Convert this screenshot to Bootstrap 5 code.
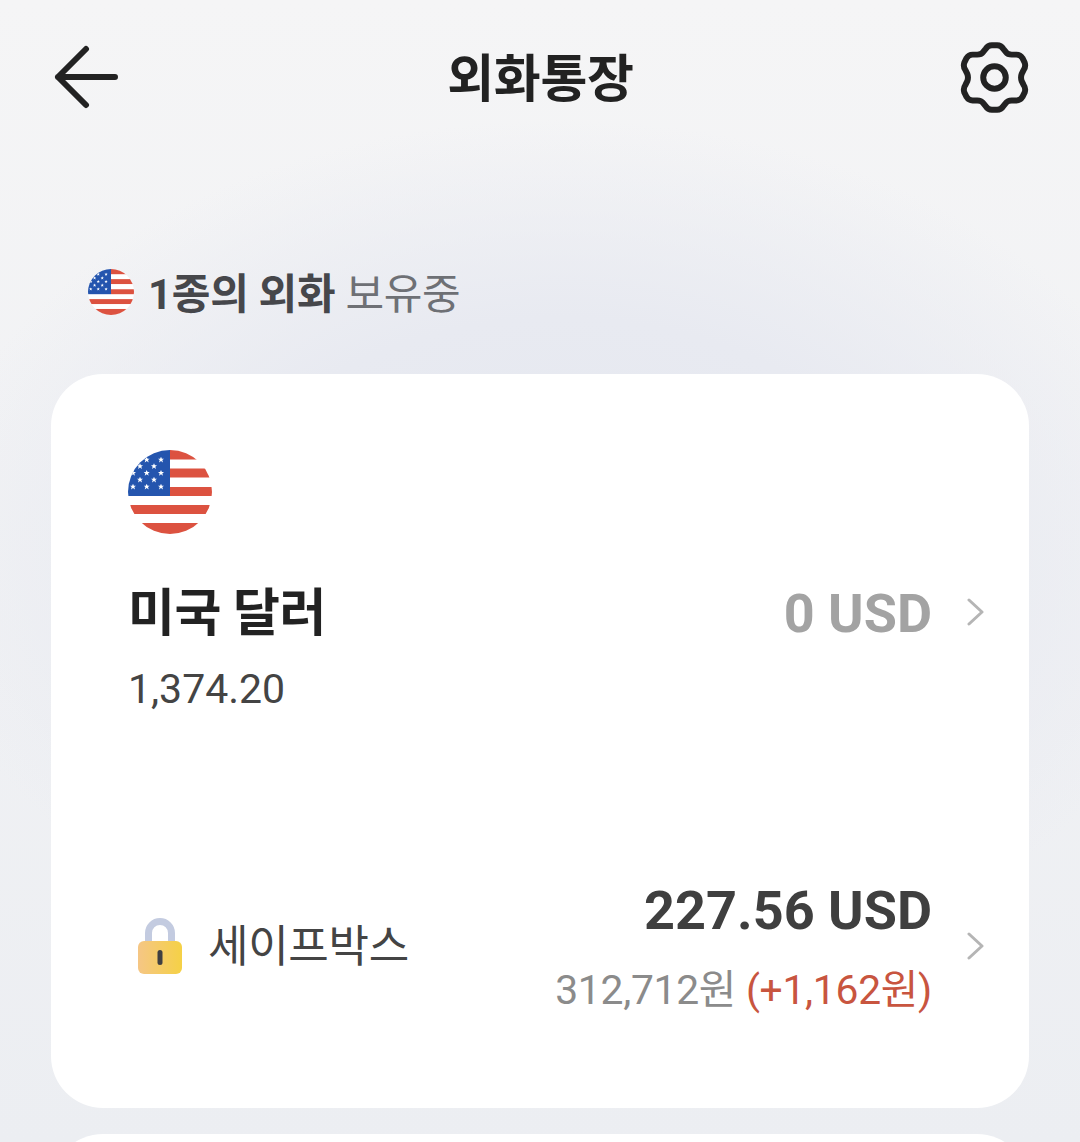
<!DOCTYPE html>
<html lang="ko">
<head>
<meta charset="utf-8">
<title>외화통장</title>
<link href="https://cdn.jsdelivr.net/npm/bootstrap@5.3.0/dist/css/bootstrap.min.css" rel="stylesheet">
<style>
html,body{height:100%}
body{width:1080px;height:1142px;overflow:hidden;font-family:Roboto,"Noto Sans CJK KR",sans-serif;color:#222;
background:radial-gradient(ellipse 640px 440px at 560px 560px,#e4e7ef 0%,#e8eaf1 55%,rgba(232,234,241,0) 100%),linear-gradient(180deg,#f5f5f6 0%,#eceef2 100%)}
.top-bar{height:158px;padding:0 51px 0 53px}
.top-title{font-size:51px;font-weight:700;letter-spacing:-.3px;line-height:1;color:#222;margin:0}
.hold-row{margin:104px 0 0 88px;height:60px;gap:14px}
.hold-text{font-size:42px;line-height:1;color:#46474b;letter-spacing:-.3px;padding-top:5px}
.hold-text b{font-weight:700}
.hold-text span{color:#6e7075;font-weight:400}
.main-panel{margin:52px 51px 0;height:734px;border-radius:52px;background:#fff;padding:76px 45px 0 77px;border:0}
.fx-name{font-size:51px;font-weight:700;line-height:1;color:#222;letter-spacing:-.5px}
.fx-amount{font-size:54px;font-weight:700;line-height:52px;color:#a3a3a3}
.fx-rate{font-size:41px;line-height:1;color:#444;margin-top:30px}
.box-name{font-size:44px;line-height:1;color:#444;letter-spacing:-.3px}
.box-amount{font-size:54px;font-weight:700;line-height:1;color:#3f3f3f}
.box-sub{font-size:40.8px;line-height:1;color:#8b8b8b;margin-top:32px;letter-spacing:-.28px}
.box-sub em{font-style:normal;color:#c8553f}
.next-panel{margin:26px 51px 0;height:60px;border-radius:52px 52px 0 0;background:#fff}
.chev{flex:none}
.fx-row{margin-top:54px}
.box-row{margin-top:174px}
.lock-wrap{margin-left:9px;gap:25px}
.end-gap{gap:34px}
.chev-up{margin-top:-4px}
.chev-up-sm{margin-top:-2px}
</style>
</head>
<body>
<svg width="0" height="0" class="d-block position-absolute">
<defs>
<clipPath id="fc"><circle cx="42" cy="42" r="42"/></clipPath>
<polygon id="st" points="0,-3 .9,-1 3,-1 1.300,.4 2,2.700 0,1.300 -2,2.700 -1.300,.4 -3,-1 -.9,-1"/>
<symbol id="usflag" viewBox="0 0 84 84">
<g clip-path="url(#fc)">
<rect width="84" height="84" fill="#fff"/>
<g fill="#dc5240">
<rect x="42" y="0" width="42" height="9.500"/>
<rect x="42" y="18.500" width="42" height="9"/>
<rect x="42" y="37" width="42" height="9"/>
<rect x="0" y="55" width="84" height="9"/>
<rect x="0" y="73" width="84" height="11"/>
</g>
<rect width="42" height="46" fill="#2455ae"/>
<g fill="#fff">
<use href="#st" x="18.700" y="9.700"/><use href="#st" x="33" y="9.700"/>
<use href="#st" x="12" y="16.300"/><use href="#st" x="26" y="16.300"/>
<use href="#st" x="5" y="23"/><use href="#st" x="18.700" y="23"/><use href="#st" x="33" y="23"/>
<use href="#st" x="12" y="29.700"/><use href="#st" x="26" y="29.700"/>
<use href="#st" x="5" y="36.700"/><use href="#st" x="18.700" y="36.700"/><use href="#st" x="33" y="36.700"/>
</g>
</g>
</symbol>
<linearGradient id="lk" x1="0" x2="1" y1="0" y2="0"><stop offset="0" stop-color="#f5c685"/><stop offset="1" stop-color="#f5d146"/></linearGradient>
</defs>
</svg>

<header class="top-bar d-flex align-items-center justify-content-between">
<svg width="68" height="68" viewBox="0 0 68 68" fill="none" stroke="#222" stroke-width="6" stroke-linecap="round" stroke-linejoin="round" aria-hidden="true"><path d="M62 32H5M33 4 5 32l28 28"/></svg>
<h1 class="top-title">외화통장</h1>
<svg width="69" height="79" viewBox="46 44 208 238" fill="none" stroke="#222" stroke-width="18" stroke-linejoin="round" aria-hidden="true"><path d="M124 70Q130 60 142 60H158Q170 60 176 70L184 80Q190 88 202 88H216Q228 88 234 98L241 112Q245 124 238 134L232 146Q228 157 232 168L238 180Q245 190 241 202L234 216Q228 226 216 226H202Q190 226 184 234L176 244Q170 254 158 254H142Q130 254 124 244L116 234Q110 226 98 226H84Q72 226 66 216L59 202Q55 190 62 180L68 168Q72 157 68 146L62 134Q55 124 59 112L66 98Q72 88 84 88H98Q110 88 116 80Z"/><circle cx="150" cy="157" r="34"/></svg>
</header>

<div class="hold-row d-flex align-items-center">
<svg width="46" height="46" aria-hidden="true"><use href="#usflag"/></svg>
<div class="hold-text"><b>1종의 외화</b> <span>보유중</span></div>
</div>

<section class="card main-panel">
<svg width="84" height="84" aria-hidden="true"><use href="#usflag"/></svg>
<div class="fx-row d-flex justify-content-between align-items-start">
<div>
<div class="fx-name">미국 달러</div>
<div class="fx-rate">1,374.20</div>
</div>
<div class="d-flex align-items-center end-gap">
<div class="fx-amount">0 USD</div>
<svg class="chev chev-up" width="18" height="30" viewBox="0 0 18 30" fill="none" stroke="#b5b5b5" stroke-width="3" stroke-linecap="round" stroke-linejoin="round" aria-hidden="true"><path d="M3 3l13 12L3 27"/></svg>
</div>
</div>
<div class="box-row d-flex justify-content-between align-items-center">
<div class="d-flex align-items-center lock-wrap">
<svg width="46" height="58" viewBox="0 0 46 58" aria-hidden="true"><path d="M11.500 28V15a11.500 11.500 0 0 1 23 0v13" fill="none" stroke="#c3cbe0" stroke-width="7"/><rect x="1" y="23" width="44" height="33" rx="6" fill="url(#lk)"/><rect x="20.500" y="32" width="5" height="15" rx="2.500" fill="#3f3f42"/></svg>
<div class="box-name">세이프박스</div>
</div>
<div class="d-flex align-items-center end-gap">
<div class="text-end">
<div class="box-amount">227.56 USD</div>
<div class="box-sub">312,712원 <em>(+1,162원)</em></div>
</div>
<svg class="chev chev-up-sm" width="18" height="30" viewBox="0 0 18 30" fill="none" stroke="#b5b5b5" stroke-width="3" stroke-linecap="round" stroke-linejoin="round" aria-hidden="true"><path d="M3 3l13 12L3 27"/></svg>
</div>
</div>
</section>
<div class="next-panel"></div>
</body>
</html>
